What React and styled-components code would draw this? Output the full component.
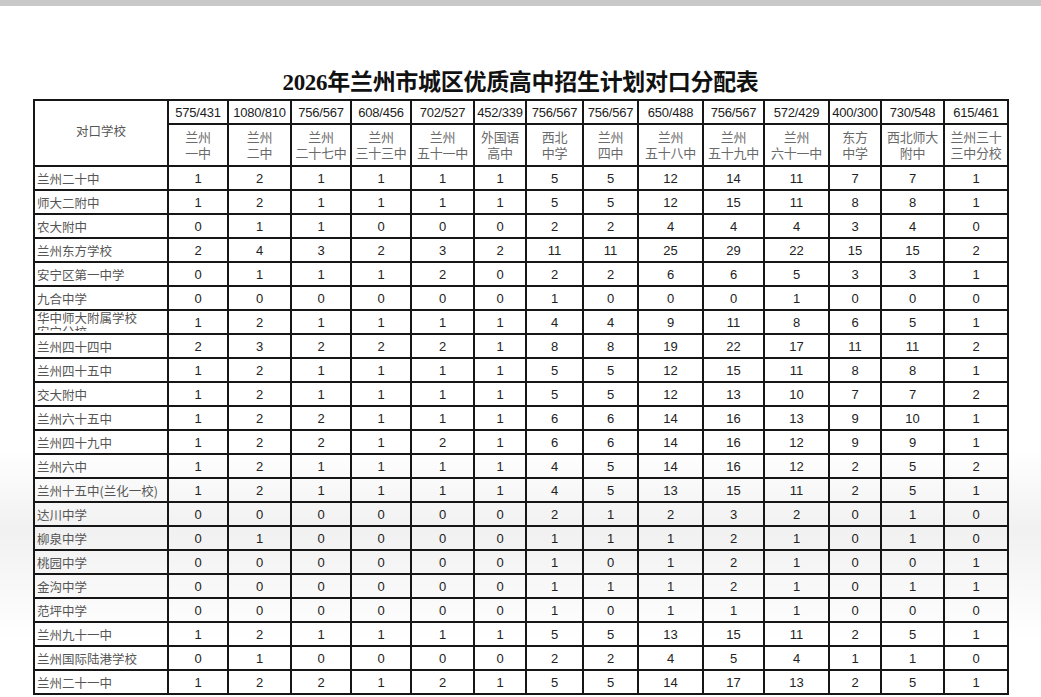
import React from "react";
import styled, { createGlobalStyle } from "styled-components";

const Global = createGlobalStyle`
  html, body { margin: 0; padding: 0; }
  body {
    width: 1041px;
    height: 697px;
    overflow: hidden;
    background: linear-gradient(180deg, #ffffff 0px, #ffffff 450px, #f1f1f1 530px, #f6f6f6 570px, #ffffff 640px);
    font-family: "Liberation Sans", "Noto Sans CJK SC", sans-serif;
  }
`;

const Page = styled.div`
  display: flex;
  flex-direction: column;
  width: 1041px;
`;

const TopBar = styled.div`
  height: 6px;
  background: #c9c9c9;
`;

const Title = styled.h1`
  margin: 63px 0 2px 0;
  text-align: center;
  font-family: "Liberation Serif", "Noto Sans CJK SC", serif;
  font-weight: 700;
  font-size: 23px;
  line-height: 28px;
  color: #111;
  letter-spacing: -0.3px;
`;

const Table = styled.table`
  margin-left: 33px;
  width: 974px;
  table-layout: fixed;
  border-collapse: collapse;
  border: 2px solid #111;
`;

const Row = styled.tr`
  height: ${(p) => p.$h}px;
`;

const Cell = styled.td`
  border: 2px solid #161616;
  padding: 0;
  text-align: center;
  vertical-align: middle;
  overflow: hidden;
`;

const CornerCell = styled(Cell)`
  font-family: "Noto Sans CJK SC", sans-serif;
  font-size: 12.5px;
  color: #555;
  padding-bottom: 5px;
`;

const QuotaCell = styled(Cell)`
  font-family: "Liberation Sans", sans-serif;
  font-size: 13px;
  color: #1c1c1c;
  letter-spacing: -0.2px;
`;

const SchoolHead = styled(Cell)`
  font-family: "Noto Sans CJK SC", sans-serif;
  font-size: 13px;
  line-height: 16px;
  color: #6a6a6a;
  white-space: pre-line;
  letter-spacing: -0.3px;
`;

const NameCell = styled(Cell)`
  text-align: left;
  padding-left: 2px;
  font-family: "Noto Sans CJK SC", sans-serif;
  font-size: 12.5px;
  color: #555;
  white-space: nowrap;
`;

const NameWrap = styled.div`
  height: 20px;
  line-height: 14px;
  overflow: hidden;
  white-space: pre-line;
  padding-top: 0px;
  margin-top: -2px;
`;

const NumCell = styled(Cell)`
  font-family: "Liberation Sans", sans-serif;
  font-size: 13px;
  color: #222;
`;

const widths = [134, 60, 63, 60, 60, 63, 52, 57, 55, 65, 61, 65, 52, 63, 64];

const cols = [
  ["575/431", "兰州\n一中"],
  ["1080/810", "兰州\n二中"],
  ["756/567", "兰州\n二十七中"],
  ["608/456", "兰州\n三十三中"],
  ["702/527", "兰州\n五十一中"],
  ["452/339", "外国语\n高中"],
  ["756/567", "西北\n中学"],
  ["756/567", "兰州\n四中"],
  ["650/488", "兰州\n五十八中"],
  ["756/567", "兰州\n五十九中"],
  ["572/429", "兰州\n六十一中"],
  ["400/300", "东方\n中学"],
  ["730/548", "西北师大\n附中"],
  ["615/461", "兰州三十\n三中分校"],
];

const rows = [
  ["兰州二十中", [1, 2, 1, 1, 1, 1, 5, 5, 12, 14, 11, 7, 7, 1]],
  ["师大二附中", [1, 2, 1, 1, 1, 1, 5, 5, 12, 15, 11, 8, 8, 1]],
  ["农大附中", [0, 1, 1, 0, 0, 0, 2, 2, 4, 4, 4, 3, 4, 0]],
  ["兰州东方学校", [2, 4, 3, 2, 3, 2, 11, 11, 25, 29, 22, 15, 15, 2]],
  ["安宁区第一中学", [0, 1, 1, 1, 2, 0, 2, 2, 6, 6, 5, 3, 3, 1]],
  ["九合中学", [0, 0, 0, 0, 0, 0, 1, 0, 0, 0, 1, 0, 0, 0]],
  ["华中师大附属学校\n安宁分校", [1, 2, 1, 1, 1, 1, 4, 4, 9, 11, 8, 6, 5, 1], true],
  ["兰州四十四中", [2, 3, 2, 2, 2, 1, 8, 8, 19, 22, 17, 11, 11, 2]],
  ["兰州四十五中", [1, 2, 1, 1, 1, 1, 5, 5, 12, 15, 11, 8, 8, 1]],
  ["交大附中", [1, 2, 1, 1, 1, 1, 5, 5, 12, 13, 10, 7, 7, 2]],
  ["兰州六十五中", [1, 2, 2, 1, 1, 1, 6, 6, 14, 16, 13, 9, 10, 1]],
  ["兰州四十九中", [1, 2, 2, 1, 2, 1, 6, 6, 14, 16, 12, 9, 9, 1]],
  ["兰州六中", [1, 2, 1, 1, 1, 1, 4, 5, 14, 16, 12, 2, 5, 2]],
  ["兰州十五中(兰化一校)", [1, 2, 1, 1, 1, 1, 4, 5, 13, 15, 11, 2, 5, 1]],
  ["达川中学", [0, 0, 0, 0, 0, 0, 2, 1, 2, 3, 2, 0, 1, 0]],
  ["柳泉中学", [0, 1, 0, 0, 0, 0, 1, 1, 1, 2, 1, 0, 1, 0]],
  ["桃园中学", [0, 0, 0, 0, 0, 0, 1, 0, 1, 2, 1, 0, 0, 1]],
  ["金沟中学", [0, 0, 0, 0, 0, 0, 1, 1, 1, 2, 1, 0, 1, 1]],
  ["范坪中学", [0, 0, 0, 0, 0, 0, 1, 0, 1, 1, 1, 0, 0, 0]],
  ["兰州九十一中", [1, 2, 1, 1, 1, 1, 5, 5, 13, 15, 11, 2, 5, 1]],
  ["兰州国际陆港学校", [0, 1, 0, 0, 0, 0, 2, 2, 4, 5, 4, 1, 1, 0]],
  ["兰州二十一中", [1, 2, 2, 1, 2, 1, 5, 5, 14, 17, 13, 2, 5, 1]],
];

export default function App() {
  return (
    <Page>
      <Global />
      <TopBar />
      <Title>2026年兰州市城区优质高中招生计划对口分配表</Title>
      <Table>
        <colgroup>
          {widths.map((w, i) => (
            <col key={i} style={{ width: w }} />
          ))}
        </colgroup>
        <thead>
          <Row $h={24}>
            <CornerCell rowSpan={2}>对口学校</CornerCell>
            {cols.map(([q], i) => (
              <QuotaCell key={i}>{q}</QuotaCell>
            ))}
          </Row>
          <Row $h={42}>
            {cols.map(([, n], i) => (
              <SchoolHead key={i}>{n}</SchoolHead>
            ))}
          </Row>
        </thead>
        <tbody>
          {rows.map(([name, vals, wrap], r) => (
            <Row $h={24} key={r}>
              <NameCell>{wrap ? <NameWrap>{name}</NameWrap> : name}</NameCell>
              {vals.map((v, i) => (
                <NumCell key={i}>{v}</NumCell>
              ))}
            </Row>
          ))}
        </tbody>
      </Table>
    </Page>
  );
}
